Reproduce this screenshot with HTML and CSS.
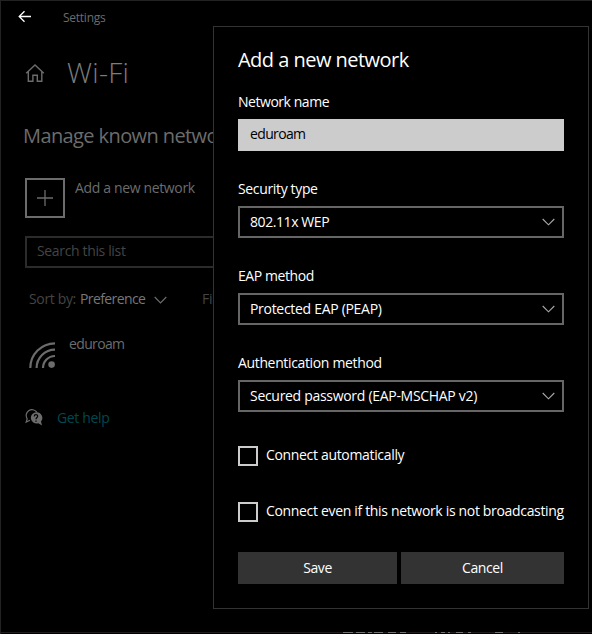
FILE: index.html
```html
<!DOCTYPE html>
<html lang="en">
<head>
<meta charset="utf-8">
<title>Settings</title>
<link rel="stylesheet" href="styles.css">
</head>
<body>
<main class="window">
  <header class="titlebar">
    <svg class="back" width="14" height="14" viewBox="0 0 14 14"><path d="M6.5 1.2 1.2 6.5l5.3 5.3M1.2 6.5H13"/></svg>
    <span>Settings</span>
  </header>
  <div class="page-head">
    <svg class="home" width="20" height="20" viewBox="0 0 20 20"><path d="M1.2 10.3 10 1.9l8.800 8.400M3.300 8.800v9.500h4.600v-6h4.400v6h4.500V8.800"/></svg>
    <h1>Wi-Fi</h1>
  </div>
  <h2>Manage known networks</h2>
  <div class="add">
    <svg class="plus" width="40" height="40" viewBox="0 0 40 40"><rect x="1" y="1" width="38" height="38"/><path d="M12 20h16M20 12v16"/></svg>
    <span>Add a new network</span>
  </div>
  <div class="search">Search this list</div>
  <div class="sort">
    <span class="sort-label">Sort by:</span>
    <span class="sort-value">Preference</span>
    <svg class="chevron" width="13" height="8" viewBox="0 0 13 8"><path d="M.7 1 6.500 6.800 12.300 1"/></svg>
    <span class="filter">Filter by:</span>
  </div>
  <div class="network">
    <svg class="wifi" width="27" height="27" viewBox="0 0 27 27"><path d="M1.300 26A24.700 24.700 0 0 1 26 1.300M7.600 26A18.400 18.400 0 0 1 26 7.600M14 26A12 12 0 0 1 26 14"/><circle cx="22.600" cy="22.600" r="3.300"/></svg>
    <span>eduroam</span>
  </div>
  <div class="help">
    <svg width="18" height="18" viewBox="0 0 18 18"><path class="bubble-back" d="M5 11.200 1.200 13l1-3.200A5.400 5.400 0 1 1 11.800 3.200"/><path class="bubble-front" d="M11 3.200a5.700 5.700 0 1 0 2.300 11.100L17 16.500l-1-4A5.700 5.700 0 0 0 11 3.200z"/><path class="query" d="M9.200 7.400c0-2.300 3.500-2.200 3.500-.2 0 1.300-1.700 1.300-1.700 3M11 11.400v1.300"/></svg>
    <span>Get help</span>
  </div>
  <div class="taskbar">
    <svg width="240" height="1" viewBox="0 0 240 1"><path d="M0 .5h10M13 .5h9M25 .5h4M31 .5h9M45 .5h8M57 .5h6M92 .5h2M98 .5h4M105 .5h2M113 .5h7M125 .5h3M152 .5h8M175 .5h2"/></svg>
  </div>
</main>
<section class="dialog">
  <h3>Add a new network</h3>
  <div class="field">
    <label class="name-label">Network name</label>
    <div class="input">eduroam</div>
  </div>
  <div class="field">
    <label>Security type</label>
    <div class="select"><span class="wep">802.11x WEP</span><svg class="chevron" width="13" height="8" viewBox="0 0 13 8"><path d="M.7 1 6.500 6.800 12.300 1"/></svg></div>
  </div>
  <div class="field">
    <label class="eap">EAP method</label>
    <div class="select"><span class="peap">Protected EAP (PEAP)</span><svg class="chevron" width="13" height="8" viewBox="0 0 13 8"><path d="M.7 1 6.500 6.800 12.300 1"/></svg></div>
  </div>
  <div class="field">
    <label>Authentication method</label>
    <div class="select"><span class="mschap">Secured password (EAP-MSCHAP v2)</span><svg class="chevron" width="13" height="8" viewBox="0 0 13 8"><path d="M.7 1 6.500 6.800 12.300 1"/></svg></div>
  </div>
  <div class="check"><i></i><span>Connect automatically</span></div>
  <div class="check"><i></i><span>Connect even if this network is not broadcasting</span></div>
  <div class="actions"><button>Save</button><button>Cancel</button></div>
</section>
</body>
</html>
```
FILE: styles.css
```css
* { box-sizing: border-box; }
body {
  margin: 0;
  background: #000;
  color: #fff;
  font: 14px/20px "Open Sans", "Noto Sans", sans-serif;
  letter-spacing: -0.35px;
  overflow: hidden;
}
h1, h2, h3 { margin: 0; font-weight: 400; }
svg { display: block; flex: none; fill: none; }
.window {
  display: flex;
  flex-direction: column;
  height: 634px;
  border-top: 1px solid #222;
  border-left: 1px solid #222;
  color: #6c6c6c;
  white-space: nowrap;
}
.titlebar {
  display: flex;
  height: 35px;
  padding: 8px 0 0 17px;
  gap: 31px;
  font-size: 12px;
  line-height: 18px;
  letter-spacing: -0.25px;
}
.back { margin-top: 1px; stroke: #fff; stroke-width: 1.3; }
.page-head { display: flex; height: 75px; padding: 17px 0 0 24px; gap: 22px; }
.home { margin-top: 10px; stroke: #6c6c6c; stroke-width: 1.4; }
h1 { color: #7c7c7c; font-size: 28px; line-height: 38px; font-weight: 300; letter-spacing: 0.3px; }
h2 { height: 66px; padding: 11px 0 0 22px; font-size: 20px; line-height: 28px; letter-spacing: -0.6px; }
.add { display: flex; gap: 10px; height: 59px; padding: 1px 0 0 24px; }
.plus { stroke: #6c6c6c; stroke-width: 2; }
.plus path { stroke-width: 1.3; }
.search {
  width: 300px;
  height: 32px;
  margin-left: 24px;
  padding: 3px 10px;
  border: 2px solid #2b2b2b;
  color: #444;
}
.sort { display: flex; height: 65px; padding: 21px 0 0 28px; }
.sort-label { width: 51px; color: #444; }
.sort-value { width: 74px; color: #777; letter-spacing: -0.6px; }
.sort .chevron { margin-top: 7px; stroke: #6c6c6c; stroke-width: 1.2; }
.filter { margin-left: 35px; color: #444; }
.network { display: flex; gap: 13px; height: 74px; padding: 1px 0 0 28px; letter-spacing: -0.65px; }
.wifi { margin-top: 8px; stroke: #6c6c6c; stroke-width: 2.2; }
.wifi circle { fill: #6c6c6c; stroke: none; }
.help { display: flex; gap: 14px; height: 225px; padding: 1px 0 0 24px; color: #00484f; }
.help svg { margin-top: 1px; }
.bubble-back { stroke: #6c6c6c; stroke-width: 1.2; }
.bubble-front { fill: #6c6c6c; }
.query { stroke: #000; stroke-width: 1.2; }
.taskbar { height: 1px; padding-left: 342px; background: #211b1d; }
.taskbar svg { stroke: #707070; }

/* modal covering the settings page */
.dialog {
  position: absolute;
  top: 26px;
  left: 213px;
  width: 376px;
  height: 583px;
  padding: 19px 24px 24px;
  border: 1px solid #333;
  background: #000;
  white-space: nowrap;
}
h3 { height: 46px; font-size: 20px; line-height: 28px; letter-spacing: -0.53px; }
.field { height: 87px; }
.field label { display: block; height: 27px; }
.field .name-label { letter-spacing: -0.46px; }
.input { height: 32px; padding: 5px 12px; background: #ccc; color: #000; letter-spacing: -0.65px; }
.select {
  display: flex;
  align-items: center;
  justify-content: space-between;
  height: 32px;
  padding: 0 7px 0 10px;
  border: 2px solid #666;
}
.select .chevron { stroke: #aaa; stroke-width: 1.1; }
.wep, .field .eap { letter-spacing: -0.42px; }
.peap, .mschap { letter-spacing: -0.3px; }
.check { display: flex; gap: 8px; height: 56px; padding-top: 6px; }
.check i { width: 20px; height: 20px; border: 2px solid #ccc; }
.check span { margin-top: -1px; letter-spacing: -0.33px; }
.actions { display: grid; grid-template-columns: 159px 163px; gap: 4px; }
button {
  height: 32px;
  padding: 0;
  border: 0;
  background: #333;
  color: #fff;
  font: inherit;
  letter-spacing: -0.4px;
}
```
